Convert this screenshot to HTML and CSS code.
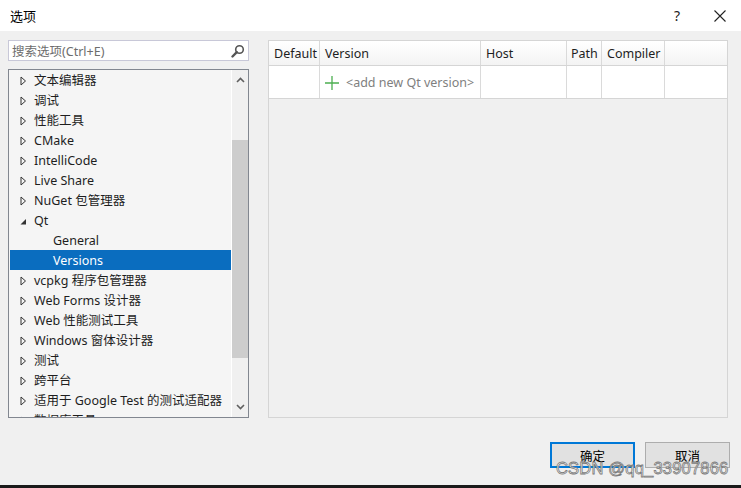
FILE: index.html
```html
<!DOCTYPE html>
<html>
<head>
<meta charset="utf-8">
<link rel="stylesheet" href="styles.css">
</head>
<body>
<div class="window">
  <div class="titlebar">
    <span class="title">选项</span>
    <span class="tb-btns">
      <span class="help">?</span>
      <svg class="close" width="12" height="12" viewBox="0 0 12 12"><path d="M0.5 0.5 L11.5 11.5 M11.5 0.5 L0.5 11.5" stroke="#222" stroke-width="1.1"/></svg>
    </span>
  </div>
  <div class="main">
    <div class="left">
      <div class="search">
        <span class="ph">搜索选项(Ctrl+E)</span>
        <svg width="14" height="14" viewBox="0 0 14 14"><circle cx="8.5" cy="5.5" r="3.8" fill="none" stroke="#555" stroke-width="1.6"/><path d="M5.8 8.2 L1.5 12.5" stroke="#555" stroke-width="2.4" stroke-linecap="round"/></svg>
      </div>
      <div class="tree">
        <div class="items">
          <div class="row"><svg class="tri" width="7" height="10" viewBox="0 0 7 10"><path d="M1 1 L5.5 5 L1 9 Z" fill="none" stroke="#333" stroke-width="1"/></svg>文本编辑器</div>
          <div class="row"><svg class="tri" width="7" height="10" viewBox="0 0 7 10"><path d="M1 1 L5.5 5 L1 9 Z" fill="none" stroke="#333" stroke-width="1"/></svg>调试</div>
          <div class="row"><svg class="tri" width="7" height="10" viewBox="0 0 7 10"><path d="M1 1 L5.5 5 L1 9 Z" fill="none" stroke="#333" stroke-width="1"/></svg>性能工具</div>
          <div class="row"><svg class="tri" width="7" height="10" viewBox="0 0 7 10"><path d="M1 1 L5.5 5 L1 9 Z" fill="none" stroke="#333" stroke-width="1"/></svg>CMake</div>
          <div class="row"><svg class="tri" width="7" height="10" viewBox="0 0 7 10"><path d="M1 1 L5.5 5 L1 9 Z" fill="none" stroke="#333" stroke-width="1"/></svg>IntelliCode</div>
          <div class="row"><svg class="tri" width="7" height="10" viewBox="0 0 7 10"><path d="M1 1 L5.5 5 L1 9 Z" fill="none" stroke="#333" stroke-width="1"/></svg>Live Share</div>
          <div class="row"><svg class="tri" width="7" height="10" viewBox="0 0 7 10"><path d="M1 1 L5.5 5 L1 9 Z" fill="none" stroke="#333" stroke-width="1"/></svg>NuGet 包管理器</div>
          <div class="row"><svg class="tri" width="7" height="10" viewBox="0 0 7 10"><path d="M6 3 L6 8.5 L0.5 8.5 Z" fill="#333"/></svg>Qt</div>
          <div class="row child">General</div>
          <div class="row child sel">Versions</div>
          <div class="row"><svg class="tri" width="7" height="10" viewBox="0 0 7 10"><path d="M1 1 L5.5 5 L1 9 Z" fill="none" stroke="#333" stroke-width="1"/></svg>vcpkg 程序包管理器</div>
          <div class="row"><svg class="tri" width="7" height="10" viewBox="0 0 7 10"><path d="M1 1 L5.5 5 L1 9 Z" fill="none" stroke="#333" stroke-width="1"/></svg>Web Forms 设计器</div>
          <div class="row"><svg class="tri" width="7" height="10" viewBox="0 0 7 10"><path d="M1 1 L5.5 5 L1 9 Z" fill="none" stroke="#333" stroke-width="1"/></svg>Web 性能测试工具</div>
          <div class="row"><svg class="tri" width="7" height="10" viewBox="0 0 7 10"><path d="M1 1 L5.5 5 L1 9 Z" fill="none" stroke="#333" stroke-width="1"/></svg>Windows 窗体设计器</div>
          <div class="row"><svg class="tri" width="7" height="10" viewBox="0 0 7 10"><path d="M1 1 L5.5 5 L1 9 Z" fill="none" stroke="#333" stroke-width="1"/></svg>测试</div>
          <div class="row"><svg class="tri" width="7" height="10" viewBox="0 0 7 10"><path d="M1 1 L5.5 5 L1 9 Z" fill="none" stroke="#333" stroke-width="1"/></svg>跨平台</div>
          <div class="row"><svg class="tri" width="7" height="10" viewBox="0 0 7 10"><path d="M1 1 L5.5 5 L1 9 Z" fill="none" stroke="#333" stroke-width="1"/></svg>适用于 Google Test 的测试适配器</div>
          <div class="row"><svg class="tri" width="7" height="10" viewBox="0 0 7 10"><path d="M1 1 L5.5 5 L1 9 Z" fill="none" stroke="#333" stroke-width="1"/></svg>数据库工具</div>
        </div>
        <div class="vscroll">
          <svg class="arr" width="9" height="6" viewBox="0 0 9 6"><path d="M1 5 L4.5 1.5 L8 5" fill="none" stroke="#606060" stroke-width="1.6"/></svg>
          <div class="track"><div class="thumb"></div></div>
          <svg class="arr" width="9" height="6" viewBox="0 0 9 6"><path d="M1 1 L4.5 4.5 L8 1" fill="none" stroke="#606060" stroke-width="1.6"/></svg>
        </div>
      </div>
    </div>
    <div class="right">
      <div class="thead">
        <div class="c c1">Default</div>
        <div class="c c2">Version</div>
        <div class="c c3">Host</div>
        <div class="c c4">Path</div>
        <div class="c c5">Compiler</div>
        <div class="c c6"></div>
      </div>
      <div class="trow">
        <div class="c c1"></div>
        <div class="c c2 add">
          <svg width="14" height="14" viewBox="0 0 14 14"><path d="M7 0 V14 M0 7 H14" stroke="#4caf50" stroke-width="1.3"/></svg>
          <span>&lt;add new Qt version&gt;</span>
        </div>
        <div class="c c3"></div>
        <div class="c c4"></div>
        <div class="c c5"></div>
        <div class="c c6"></div>
      </div>
    </div>
  </div>
  <div class="footer">
    <button class="btn primary">确定</button>
    <button class="btn">取消</button>
  </div>
  <div class="watermark">CSDN @qq_33907866</div>
  <div class="bottomedge"></div>
</div>
</body>
</html>
```
FILE: styles.css
```css
* { box-sizing: border-box; }
html, body { margin: 0; padding: 0; }
body {
  width: 741px; height: 488px; overflow: hidden;
  background: #f0f0f0;
  font-family: "Segoe UI", "Noto Sans", "Noto Sans CJK SC", sans-serif;
  font-size: 12px; color: #1e1e1e;
}
.window { position: relative; width: 741px; height: 488px; display: flex; flex-direction: column; }
.titlebar {
  height: 31px; background: #fff; display: flex; align-items: center;
  justify-content: space-between; padding: 0 15px 0 10px;
}
.title { font-size: 13px; color: #000; }
.tb-btns { display: flex; align-items: center; gap: 34px; }
.help { font-size: 14px; color: #222; }
.close { margin-top: 1px; }
.main { display: flex; padding: 9px 13px 0 8px; gap: 19px; height: 387px; }
.left { width: 241px; display: flex; flex-direction: column; gap: 8px; }
.search {
  height: 21px; background: #fff; border: 1px solid #c8c8d8;
  display: flex; align-items: center; justify-content: space-between; padding: 0 3px 0 3px;
}
.ph { color: #6d6d6d; font-size: 12.5px; }
.tree {
  height: 349px; border: 1px solid #828790; background: #f5f5f5;
  display: flex; overflow: hidden;
}
.items { flex: 1; padding: 0 0 0 1px; overflow: hidden; }
.row {
  height: 20px; line-height: 22px; padding-left: 24px; white-space: nowrap;
  position: relative; color: #1e1e1e; font-size: 12.5px;
}
.row.child { padding-left: 43px; }
.row.sel { background: #0a6dbf; color: #fff; }
.tri { position: absolute; left: 10px; top: 6px; }
.vscroll {
  width: 17px; background: #f0f0f0; border-left: 1px solid #fff;
  display: flex; flex-direction: column; align-items: center;
}
.arr { margin: 7px 0; }
.track { flex: 1; width: 100%; position: relative; }
.thumb { position: absolute; left: 0; right: 0; top: 50px; height: 218px; background: #cdcdcd; }
.right {
  width: 460px; height: 378px; border: 1px solid #d5d5d5; background: #f0f0f0;
}
.thead { display: flex; height: 25px; background: linear-gradient(#ffffff, #f3f3f3); border-bottom: 1px solid #d5d5d5; }
.trow { display: flex; height: 33px; background: #fff; border-bottom: 1px solid #d5d5d5; }
.c { border-right: 1px solid #dadada; padding-left: 5px; line-height: 26px; white-space: nowrap; color: #1e1e1e; font-size: 12.5px; }
.c1 { width: 51px; }
.c2 { width: 161px; }
.c3 { width: 86px; }
.c4 { width: 35px; padding-left: 4px; }
.c5 { width: 63px; }
.c6 { flex: 1; border-right: none; }
.add { display: flex; align-items: center; gap: 7px; padding-left: 5px; padding-top: 1px; color: #808080; }
.footer { display: flex; justify-content: flex-end; gap: 10px; padding: 24px 11px 0 0; }
.btn {
  width: 85px; height: 26px; background: #e1e1e1; border: 1px solid #adadad;
  font-family: inherit; font-size: 12.5px; color: #000; padding: 0;
}
.btn.primary { border: 2px solid #0078d7; }
.watermark {
  position: absolute; left: 556px; top: 459px;
  font-family: "Liberation Sans", sans-serif; font-size: 16.5px;
  color: rgba(255,255,255,0.85); -webkit-text-stroke: 0.8px #7a7a7a;
  letter-spacing: 0.2px;
}
.bottomedge { position: absolute; left: 0; right: 0; bottom: 0; height: 3px; background: #1a1a1a; }
```
